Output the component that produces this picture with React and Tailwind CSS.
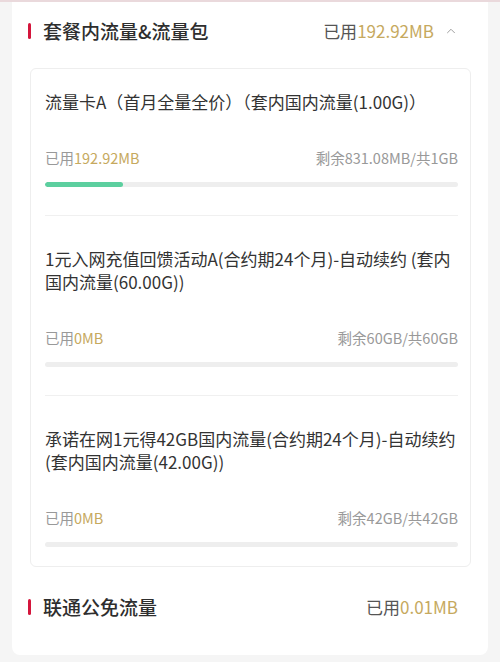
import React from 'react';
import { ChevronUp } from 'lucide-react';

const packages = [
  {
    id: 'a',
    lines: ['流量卡A（首月全量全价）（套内国内流量(1.00G)）'],
    used: '192.92MB',
    remain: '剩余831.08MB/共1GB',
    pct: 18.84,
  },
  {
    id: 'b',
    lines: ['1元入网充值回馈活动A(合约期24个月)-自动续约 (套内', '国内流量(60.00G))'],
    used: '0MB',
    remain: '剩余60GB/共60GB',
    pct: 0,
  },
  {
    id: 'c',
    lines: ['承诺在网1元得42GB国内流量(合约期24个月)-自动续约', '(套内国内流量(42.00G))'],
    used: '0MB',
    remain: '剩余42GB/共42GB',
    pct: 0,
  },
];

const SectionHeader = ({ title, used, open }) => (
  <div className="flex items-center justify-between pl-4 pr-[30px] h-6">
    <div className="flex items-center">
      <div className="w-[3px] h-[16px] rounded-full bg-[#d4163c]" />
      <span className="ml-3 text-[19px] leading-6 font-medium text-[#2e2e2e]">{title}</span>
    </div>
    <div className="flex items-center">
      <span className="text-[17px] leading-6 text-[#555]">
        已用<span className="text-[#c6a95e]">{used}</span>
      </span>
      {open && <ChevronUp className="ml-[10px] w-[14px] h-[14px] text-[#999]" strokeWidth={1.6} />}
    </div>
  </div>
);

export default function App() {
  return (
    <div
      className="w-[500px] h-[662px] bg-[#f5f5f5] overflow-hidden"
      style={{ fontFamily: '"Noto Sans CJK SC", "Noto Sans", sans-serif' }}
    >
      <div className="h-[2px] bg-[#ead9dc]" />
      <div className="mx-3 bg-white rounded-b-lg pt-[17px] pb-[36px]">
        <SectionHeader title="套餐内流量&流量包" used="192.92MB" open />

        {/* package list card */}
        <div className="mt-[25px] ml-[18px] mr-[17px] border border-[#eeeeee] rounded-md pl-[14px] pr-[12px]">
          {packages.map((p, i) => (
            <div
              key={p.id}
              className={`${i === 0 ? 'pt-[21px]' : 'pt-[31px]'} ${
                i === packages.length - 1 ? 'pb-[19px]' : 'pb-[28px] border-b border-[#f0f0f0]'
              }`}
            >
              <div className="text-[17px] leading-[23px] text-[#333] whitespace-nowrap">
                {p.lines.map((l) => (
                  <div key={l}>{l}</div>
                ))}
              </div>
              <div className="mt-[35px] flex items-center justify-between text-[14.5px] leading-5 text-[#999]">
                <span>
                  已用<span className="text-[#c6a95e]">{p.used}</span>
                </span>
                <span>{p.remain}</span>
              </div>
              <div className="mt-[14px] h-[5px] rounded-full bg-[#eeeeee] overflow-hidden">
                <div className="h-full rounded-full bg-[#5ccf9f]" style={{ width: `${p.pct}%` }} />
              </div>
            </div>
          ))}
        </div>

        <div className="mt-[28px]">
          <SectionHeader title="联通公免流量" used="0.01MB" />
        </div>
      </div>
    </div>
  );
}
